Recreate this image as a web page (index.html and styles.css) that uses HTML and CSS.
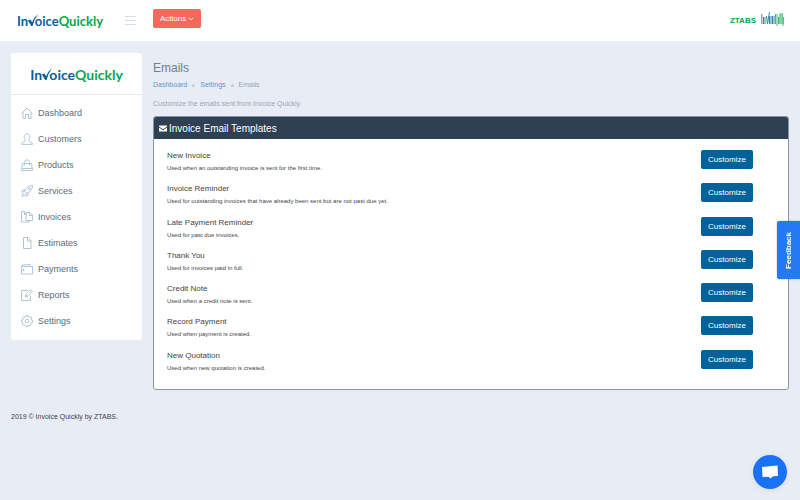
FILE: index.html
```html
<!DOCTYPE html>
<html lang="en">
<head>
    <meta charset="UTF-8">
    <meta name="viewport" content="width=device-width, initial-scale=1.0">
    <title>Emails - Invoice Quickly</title>
    <link rel="stylesheet" href="styles.css">
</head>
<body>
    <header class="topbar">
        <a class="logo" href="#">In<span class="tick">v<svg viewBox="0 0 12 14"><path d="M0 7.500 L3 6.500 L5 9.500 Q7 4 12 0 Q7.500 6 5.500 14 L4 14 Z"/></svg></span>oice<span class="green">Quickly</span></a>
        <button class="toggler" aria-label="Toggle menu"><span></span><span></span><span></span></button>
        <button class="actions">Actions
            <svg viewBox="0 0 6 4"><path d="M1 .8l2 2 2-2"/></svg>
        </button>
        <a class="user" href="#">ZTABS
            <svg class="avatar" viewBox="0 0 23 16">
                <path class="a" d="M.8 3v10M2.500 6v7M4 6v7M5.500 5l1 8 2-12M8.500 5v8M10 5v8M11.500 5v8M13 5v8"/>
                <path class="b" d="M14.500 3v10M16 3v12M17.500 6v7M18.800 3v10M20 2v11M21.200 2v11M22.400 6v7l-1 2"/>
            </svg>
        </a>
    </header>

    <div class="page">
        <nav class="sidebar">
            <div class="sidebar-logo">
                <a class="logo large" href="#">In<span class="tick">v<svg viewBox="0 0 12 14"><path d="M0 7.500 L3 6.500 L5 9.500 Q7 4 12 0 Q7.500 6 5.500 14 L4 14 Z"/></svg></span>oice<span class="green">Quickly</span></a>
            </div>
            <ul class="menu">
                <li><a href="#"><svg viewBox="0 0 12 12"><path d="M.5 6.500L6 1l5.500 5.500M2 5.500v6h2.500V7.500h3v4H10v-6"/></svg>Dashboard</a></li>
                <li><a href="#"><svg viewBox="0 0 12 12"><path d="M4.500 7.500C2.500 5.500 2.800.8 6 .8s3.500 4.700 1.500 6.700c0 1.500 4 1.200 4 3.900H.5c0-2.700 4-2.400 4-3.900z"/></svg>Customers</a></li>
                <li><a href="#"><svg viewBox="0 0 12 12"><path d="M1.500 4.500h9l1 7H.5zM3.500 6.500V3.500a2.500 2.700 0 0 1 5 0v3M.8 9.500h10.400"/></svg>Products</a></li>
                <li><a href="#"><svg viewBox="0 0 12 12"><path d="M3.500 6.500C5 3 7.500.7 11.500.5c0 4-2.500 6.500-6 8zM4.500 4.500L2 5 .5 7.200l3-.7M7.500 7.500L7 10l-2.200 1.500.7-3M2.500 8L.5 11.500 4 9.500"/><circle cx="8.300" cy="3.700" r="1"/></svg>Services</a></li>
                <li><a href="#"><svg viewBox="0 0 12 12"><path d="M5 9.500V1.500h4l2.500 2.500v5.500H5M8.500 1.500v3h3M5 3.500L3.500.5h-3v10.500H8V9.500M3.500.5v3H5"/></svg>Invoices</a></li>
                <li><a href="#"><svg viewBox="0 0 12 12"><path d="M2.500.5h4.500l3 3v8H2.500zM6.500.5V4H10"/></svg>Estimates</a></li>
                <li><a href="#"><svg viewBox="0 0 12 12"><path d="M.5 3.500h11v7.500H.5zM.5 3.500L1.500 2 9 1.500l1 2M2 6.500h1v1H2z"/></svg>Payments</a></li>
                <li><a href="#"><svg viewBox="0 0 12 12"><path d="M7 1.500H.5v10h9V6.500M4 8l.7-2.500L9.500.7l1.800 1.800-4.800 4.800zM8.500 1.700l1.800 1.800M4.700 5.500l1.800 1.800"/></svg>Reports</a></li>
                <li><a href="#"><svg viewBox="0 0 12 12"><path d="M5 .5h2l.3 1.500 1 .4L9.600 1.500 11 2.900 10 4.200l.3.800 1.200.3v1.900l-1.300.3-.4.900.8 1.100-1.300 1.400-1.300-.8-.8.300L7 11.500H5l-.3-1.300-1-.3-1.200.8L1.200 9.300 2 8.200l-.3-.9L.5 7V5.200L1.800 4.900l.4-.9L1.400 2.800 2.700 1.400l1.100.9.900-.3z"/><circle cx="6" cy="6" r="1.800"/></svg>Settings</a></li>
            </ul>
        </nav>

        <main class="content">
            <h1>Emails</h1>
            <div class="breadcrumb">
                <a href="#">Dashboard</a><i></i><a href="#">Settings</a><i></i><span>Emails</span>
            </div>
            <p class="intro">Customize the emails sent from Invoice Quickly.</p>

            <section class="panel">
                <h2>
                    <svg viewBox="0 0 8 7"><path d="M0 .5h8v1L4 4.300 0 1.500zM0 2.500l4 2.800 4-2.800V6.500H0z"/></svg>
                    Invoice Email Templates
                </h2>
                <div class="templates">
                    <div class="template">
                        <div><h3>New Invoice</h3><p>Used when an outstanding invoice is sent for the first time.</p></div>
                        <button class="customize">Customize</button>
                    </div>
                    <div class="template">
                        <div><h3>Invoice Reminder</h3><p>Used for outstanding invoices that have already been sent but are not past due yet.</p></div>
                        <button class="customize">Customize</button>
                    </div>
                    <div class="template">
                        <div><h3>Late Payment Reminder</h3><p>Used for past due invoices.</p></div>
                        <button class="customize">Customize</button>
                    </div>
                    <div class="template">
                        <div><h3>Thank You</h3><p>Used for invoices paid in full.</p></div>
                        <button class="customize">Customize</button>
                    </div>
                    <div class="template">
                        <div><h3>Credit Note</h3><p>Used when a credit note is sent.</p></div>
                        <button class="customize">Customize</button>
                    </div>
                    <div class="template">
                        <div><h3>Record Payment</h3><p>Used when payment is created.</p></div>
                        <button class="customize">Customize</button>
                    </div>
                    <div class="template">
                        <div><h3>New Quotation</h3><p>Used when new quotation is created.</p></div>
                        <button class="customize">Customize</button>
                    </div>
                </div>
            </section>
        </main>
    </div>

    <footer class="footer">2019 © Invoice Quickly by ZTABS.</footer>

    <button class="feedback">Feedback</button>
    <button class="chat" aria-label="Open chat">
        <svg viewBox="0 0 18 16"><path d="M1 3L16.500 1.500l.5 10.500-5 .3L9.500 14.500 7.500 12.700l-6 .3z"/></svg>
    </button>
</body>
</html>
```

FILE: styles.css
```css
* {
    box-sizing: border-box;
}
body {
    margin: 0;
    font-family: "Liberation Sans", Arial, sans-serif;
    font-size: 7px;
    color: #444;
    background-color: #e8ecf4;
}
a {
    text-decoration: none;
}
button {
    font-family: inherit;
    font-size: 8px;
    border: none;
    padding: 0;
    color: white;
    cursor: pointer;
}
h1, h2, h3, p {
    margin: 0;
    font-weight: normal;
}
svg {
    fill: none;
}

/* header */
.topbar {
    display: flex;
    align-items: center;
    height: 41px;
    padding: 0 16px 0 17px;
    background-color: white;
}
.logo {
    font-family: Lato, sans-serif;
    font-size: 13px;
    font-weight: bold;
    line-height: 16px;
    color: #0b6099;
}
.logo.large {
    font-size: 14px;
}
.green {
    color: #07a651;
}
.tick {
    position: relative;
    color: transparent;
}
.tick svg {
    position: absolute;
    left: -1px;
    bottom: 3px;
    width: 12px;
    height: 12px;
    fill: #0b6099;
}
.toggler {
    display: flex;
    flex-direction: column;
    gap: 3px;
    width: 11px;
    margin: 0 17px;
    background: none;
}
.toggler span {
    height: 1px;
    background-color: #d5dfe9;
}
.topbar .logo {
    width: 91px;
}
.actions {
    height: 19px;
    padding: 0 7px;
    margin-bottom: 4px;
    border-radius: 2px;
    background-color: #f36a5a;
}
.actions svg {
    width: 6px;
    height: 4px;
    stroke: white;
}
.user {
    display: flex;
    align-items: center;
    gap: 5px;
    margin-left: auto;
    font-size: 8px;
    font-weight: bold;
    line-height: 18px;
    color: #07a651;
}
.avatar {
    width: 23px;
    height: 16px;
    margin-bottom: 4px;
}
.avatar .a {
    stroke: #3c83b0;
}
.avatar .b {
    stroke: #3dbb77;
}

/* sidebar */
.page {
    display: flex;
    align-items: flex-start;
    gap: 11px;
    padding: 12px 11px 0;
}
.sidebar {
    flex: 0 0 131px;
    border-radius: 3px;
    background-color: white;
}
.sidebar-logo {
    display: flex;
    align-items: center;
    justify-content: center;
    height: 42px;
    padding-top: 3px;
    border-bottom: 1px solid #e6e9ed;
}
.menu {
    list-style: none;
    margin: 0;
    padding: 5px 0 6px;
}
.menu a {
    display: flex;
    align-items: center;
    gap: 5px;
    height: 26px;
    padding-left: 10px;
    font-size: 9px;
    color: #5b6b7c;
}
.menu svg {
    width: 12px;
    height: 12px;
    stroke: #b0c6d8;
}

/* content */
.content {
    flex: 1;
    min-width: 0;
}
h1 {
    margin-top: 8px;
    font-size: 12px;
    line-height: 14px;
    color: #6f7f8e;
}
.breadcrumb {
    display: flex;
    align-items: center;
    margin-top: 5px;
    line-height: 10px;
    color: #9aa8b3;
}
.breadcrumb a {
    color: #5b9bd1;
}
.breadcrumb i {
    width: 3px;
    height: 3px;
    margin: 0 5px;
    border-radius: 50%;
    background-color: #c5cdd8;
}
.intro {
    margin: 9px 0 7px;
    line-height: 10px;
    color: #9aa8b3;
}
.panel {
    border: 1px solid #8795a6;
    border-radius: 3px;
    background-color: white;
    overflow: hidden;
}
.panel h2 {
    display: flex;
    align-items: center;
    gap: 2px;
    height: 22px;
    padding-left: 5px;
    font-size: 10px;
    color: white;
    background-color: #2f4053;
}
.panel h2 svg {
    width: 8px;
    height: 7px;
    fill: white;
}
.templates {
    display: grid;
    grid-auto-rows: 1fr;
    padding: 11px 35px 6px 13px;
    height: 250px;
}
.template {
    display: flex;
    align-items: flex-start;
    justify-content: space-between;
}
.template h3 {
    font-size: 8px;
    line-height: 12px;
}
.template p {
    font-size: 6px;
    line-height: 12px;
}
.customize {
    width: 52px;
    height: 19px;
    border-radius: 2px;
    background-color: #036299;
}
.footer {
    padding: 22px 11px;
    line-height: 10px;
}

/* floating buttons */
.feedback {
    position: fixed;
    top: 221px;
    right: 0;
    width: 23px;
    height: 58px;
    border-radius: 2px 0 0 2px;
    font-weight: bold;
    writing-mode: sideways-lr;
    background-color: #2579f2;
    box-shadow: 0 0 2px rgba(0, 0, 0, 0.3);
}
.chat {
    position: fixed;
    right: 13px;
    bottom: 11px;
    display: flex;
    align-items: center;
    justify-content: center;
    width: 34px;
    height: 34px;
    border-radius: 50%;
    background-color: #1972f5;
    box-shadow: 0 1px 6px rgba(0, 0, 0, 0.08);
}
.chat svg {
    width: 18px;
    height: 16px;
    fill: white;
}
```
